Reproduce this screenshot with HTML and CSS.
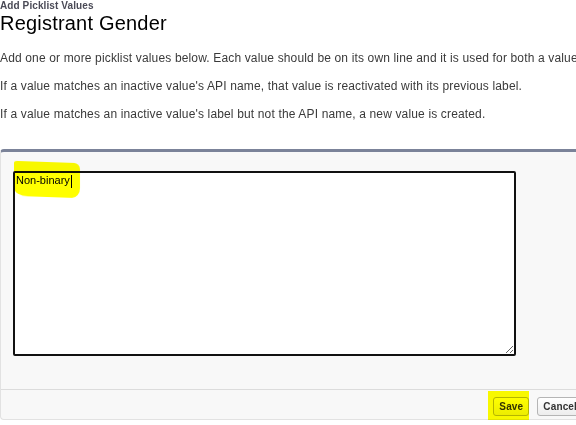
FILE: index.html
```html
<!DOCTYPE html>
<html lang="en">
<head>
<meta charset="utf-8">
<title>Add Picklist Values</title>
<link rel="stylesheet" href="styles.css">
</head>
<body>
<div class="page">
  <div class="header">
    <div class="subtitle">Add Picklist Values</div>
    <h1 class="title">Registrant Gender</h1>
  </div>
  <div class="intro">
    <p>Add one or more picklist values below. Each value should be on its own line and it is used for both a value's API name and label.</p>
    <p>If a value matches an inactive value's API name, that value is reactivated with its previous label.</p>
    <p>If a value matches an inactive value's label but not the API name, a new value is created.</p>
  </div>
  <div class="panel">
    <div class="panel-body">
      <div class="field">
        <textarea class="values" spellcheck="false">Non-binary</textarea>
        <span class="caret"></span>
        <span class="mark mark-text"></span>
      </div>
    </div>
    <div class="panel-footer">
      <span class="btn-wrap"><button class="btn">Save</button><span class="mark mark-btn"></span></span>
      <button class="btn">Cancel</button>
    </div>
  </div>
</div>
</body>
</html>
```
FILE: styles.css
```css
html, body {
  margin: 0;
  padding: 0;
  overflow: hidden;
  background: #ffffff;
}

.page {
  font-family: "Liberation Sans", Arial, sans-serif;
  color: #333333;
  width: 600px;
}

.header {
  display: flex;
  flex-direction: column;
}

.subtitle {
  font-size: 10px;
  line-height: 11px;
  font-weight: bold;
  letter-spacing: 0.1px;
  color: #4a4a56;
}

.title {
  margin: 0;
  font-size: 20px;
  line-height: 24px;
  font-weight: normal;
  letter-spacing: 0.2px;
  color: #000000;
}

.intro {
  display: flex;
  flex-direction: column;
  gap: 12px;
  margin-top: 15px;
}

.intro p {
  margin: 0;
  font-size: 12px;
  line-height: 16px;
  letter-spacing: 0.15px;
  white-space: nowrap;
  color: #3a3a3a;
}

.panel {
  margin-top: 27px;
  width: 593px;
  box-sizing: border-box;
  background: #f8f8f8;
  border-top: 3px solid #7b8399;
  border-left: 1px solid #e2e2e2;
  border-bottom: 1px solid #e2e2e2;
  border-radius: 4px;
}

.panel-body {
  padding: 19px 0 33px 12px;
}

.field {
  position: relative;
  width: 503px;
  height: 185px;
}

.values {
  display: block;
  box-sizing: border-box;
  width: 503px;
  height: 185px;
  margin: 0;
  padding: 1px;
  border: 2px solid #111111;
  border-radius: 2px;
  background: #ffffff;
  font-family: "Liberation Sans", Arial, sans-serif;
  font-size: 11px;
  line-height: 13px;
  color: #000000;
  outline: none;
  resize: both;
}

.caret {
  position: absolute;
  left: 58px;
  top: 4px;
  width: 1px;
  height: 13px;
  background: #000000;
}

.mark {
  position: absolute;
  background: #ffff00;
  mix-blend-mode: multiply;
  pointer-events: none;
}

.mark-text {
  left: 1px;
  top: -9px;
  width: 66px;
  height: 35px;
  border-radius: 3px 6px 8px 14px / 2px 6px 10px 8px;
  transform: skewY(2deg);
  filter: blur(0.4px);
}

.panel-footer {
  display: flex;
  justify-content: flex-end;
  align-items: flex-start;
  gap: 8px;
  height: 30px;
  box-sizing: border-box;
  padding: 7px 10px 0 0;
  border-top: 1px solid #dcdcdc;
}

.btn-wrap {
  position: relative;
  display: flex;
}

.btn {
  margin: 0;
  padding: 0 5px;
  height: 19px;
  box-sizing: border-box;
  border: 1px solid #b5b5b5;
  border-radius: 3px;
  background: linear-gradient(#ffffff, #ededed);
  font-family: "Liberation Sans", Arial, sans-serif;
  font-size: 10px;
  line-height: 17px;
  font-weight: bold;
  letter-spacing: 0.15px;
  color: #333333;
}

.mark-btn {
  left: -5px;
  top: -6px;
  right: 0;
  bottom: -5px;
}
```
